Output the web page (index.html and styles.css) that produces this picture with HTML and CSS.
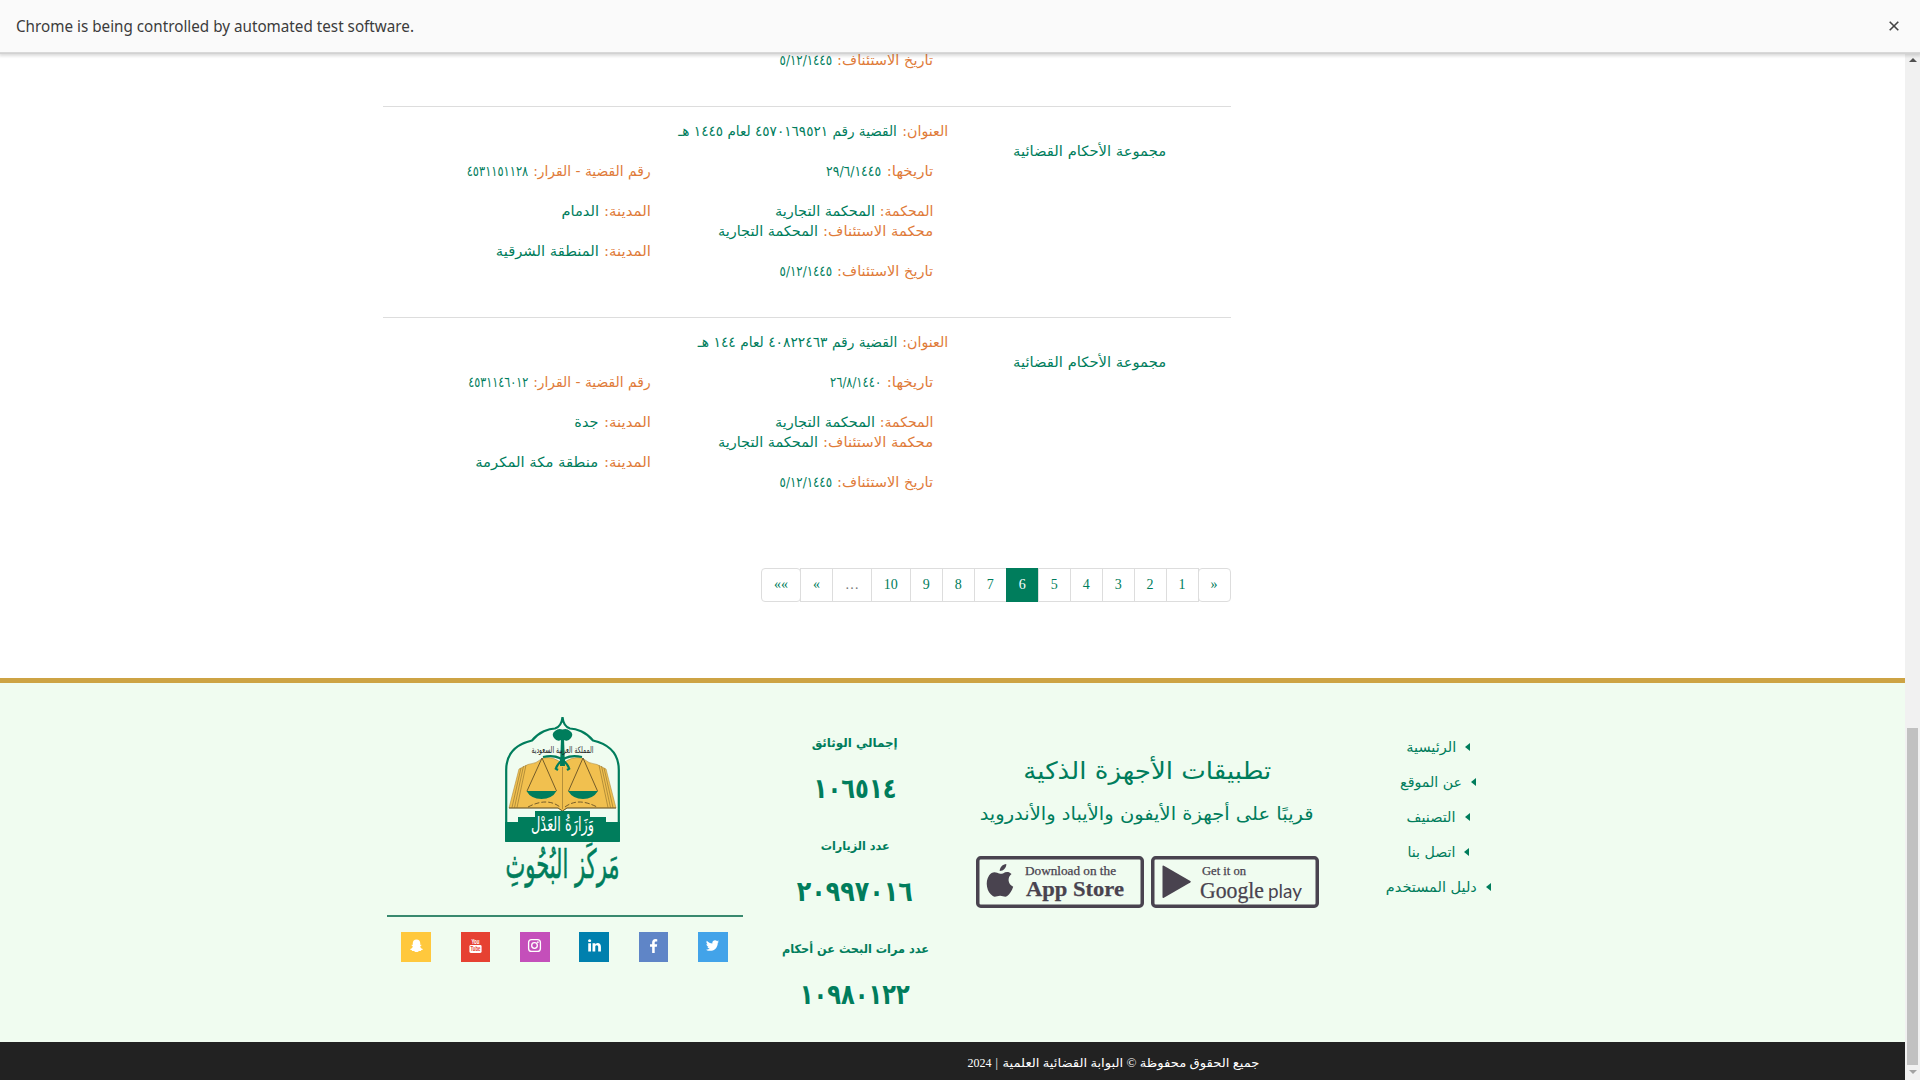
FILE: index.html
```html
<!DOCTYPE html>
<html lang="ar">
<head>
<meta charset="utf-8">
<title>البوابة القضائية العلمية</title>
<link rel="stylesheet" href="styles.css">
</head>
<body>
<div class="infobar">
  <span class="fit" data-w="398">Chrome is being controlled by automated test software.</span>
  <svg class="close" width="10" height="10" viewBox="0 0 10 10"><path d="M.7.7l8.6 8.6M9.3.7L.7 9.3"/></svg>
</div>
<div class="window">
<div class="page" dir="rtl">
  <main class="results">
    <div class="case case-cut">
      <div class="details"><div class="col-a"><p><b class="fit" data-w="96">تاريخ الاستئناف:</b><span class="fit" data-w="52.5">٥/١٢/١٤٤٥</span></p></div></div>
    </div>
    <div class="case">
      <div class="group"><span class="fit" data-w="153">مجموعة الأحكام القضائية</span></div>
      <div class="details">
        <p class="title"><b class="fit" data-w="46">العنوان:</b><span class="fit" data-w="218.5">القضية رقم ٤٥٧٠١٦٩٥٢١ لعام ١٤٤٥ هـ</span></p>
        <div class="col-a">
          <p class="gap"><b class="fit" data-w="46.5">تاريخها:</b><span class="fit" data-w="55">٢٩/٦/١٤٤٥</span></p>
          <p><b class="fit" data-w="53.5">المحكمة:</b><span class="fit" data-w="100">المحكمة التجارية</span></p>
          <p class="gap"><b class="fit" data-w="110">محكمة الاستئناف:</b><span class="fit" data-w="100">المحكمة التجارية</span></p>
          <p><b class="fit" data-w="96">تاريخ الاستئناف:</b><span class="fit" data-w="52.5">٥/١٢/١٤٤٥</span></p>
        </div>
        <div class="col-b">
          <p class="gap"><b class="fit" data-w="117.5">رقم القضية - القرار:</b><span class="fit" data-w="61.500">٤٥٣١١٥١١٢٨</span></p>
          <p class="gap"><b class="fit" data-w="47">المدينة:</b><span class="fit" data-w="37.5">الدمام</span></p>
          <p><b class="fit" data-w="47">المدينة:</b><span class="fit" data-w="103">المنطقة الشرقية</span></p>
        </div>
      </div>
    </div>
    <div class="case">
      <div class="group"><span class="fit" data-w="153">مجموعة الأحكام القضائية</span></div>
      <div class="details">
        <p class="title"><b class="fit" data-w="46">العنوان:</b><span class="fit" data-w="199.500">القضية رقم ٤٠٨٢٢٤٦٣ لعام ١٤٤ هـ</span></p>
        <div class="col-a">
          <p class="gap"><b class="fit" data-w="46.5">تاريخها:</b><span class="fit" data-w="51">٢٦/٨/١٤٤٠</span></p>
          <p><b class="fit" data-w="53.5">المحكمة:</b><span class="fit" data-w="100">المحكمة التجارية</span></p>
          <p class="gap"><b class="fit" data-w="110">محكمة الاستئناف:</b><span class="fit" data-w="100">المحكمة التجارية</span></p>
          <p><b class="fit" data-w="96">تاريخ الاستئناف:</b><span class="fit" data-w="52.5">٥/١٢/١٤٤٥</span></p>
        </div>
        <div class="col-b">
          <p class="gap"><b class="fit" data-w="117.5">رقم القضية - القرار:</b><span class="fit" data-w="60">٤٥٣١١٤٦٠١٢</span></p>
          <p class="gap"><b class="fit" data-w="47">المدينة:</b><span class="fit" data-w="24">جدة</span></p>
          <p><b class="fit" data-w="47">المدينة:</b><span class="fit" data-w="123">منطقة مكة المكرمة</span></p>
        </div>
      </div>
    </div>
    <nav class="pagination" dir="ltr">
      <a class="round wide">««</a><a>«</a><a class="dots wide">…</a><a class="wide">10</a><a>9</a><a>8</a><a>7</a><a class="active">6</a><a>5</a><a>4</a><a>3</a><a>2</a><a>1</a><a class="round">»</a>
    </nav>
  </main>

  <footer class="footer">
    <ul class="links">
      <li><i></i><span class="fit" data-w="50">الرئيسية</span></li>
      <li><i></i><span class="fit" data-w="62">عن الموقع</span></li>
      <li><i></i><span class="fit" data-w="49">التصنيف</span></li>
      <li><i></i><span class="fit" data-w="48">اتصل بنا</span></li>
      <li><i></i><span class="fit" data-w="91">دليل المستخدم</span></li>
    </ul>
    <section class="apps">
      <h2><span class="fit" data-w="248">تطبيقات الأجهزة الذكية</span></h2>
      <h3><span class="fit" data-w="334">قريبًا على أجهزة الأيفون والأيباد والأندرويد</span></h3>
      <div class="badges" dir="ltr">
        <svg width="168" height="52" viewBox="0 0 168 52">
          <rect class="frame" x="1.75" y="1.75" width="164.500" height="48.500" rx="3"/>
          <path d="M27 17.500c3-2 6-2 8.500.6-4.500 3.400-3.700 10.400 1.700 12.600-1.300 4-3.700 7.500-6 9.400-2.300 1.500-4.300-.4-7.200-.3-3 0-5 1.800-7.200.2C11 36.500 8.500 26 13.200 19.300c2-2.900 5-3.700 8-2.500 2.600 1.100 3.500 1.300 5.800.7z"/>
          <path d="M23.700 15c-.1-3.600 3-6.900 6.600-7 .3 3.600-2.800 7-6.600 7z"/>
          <text x="49" y="18.500" class="slab" font-size="12" textLength="91" lengthAdjust="spacingAndGlyphs">Download on the</text>
          <text x="50" y="40" class="slab heavy" font-size="21" textLength="98" lengthAdjust="spacingAndGlyphs">App Store</text>
        </svg>
        <svg width="168" height="52" viewBox="0 0 168 52">
          <rect class="frame" x="1.75" y="1.75" width="164.500" height="48.500" rx="3"/>
          <path d="M11.500 10.500q0-1.600 1.400-.8L39.300 25q1.200.8 0 1.600L12.900 41.800q-1.400.6-1.400-.8z"/>
          <text x="51" y="18.500" class="slab" font-size="12" textLength="44" lengthAdjust="spacingAndGlyphs">Get it on</text>
          <text x="49" y="41.500" class="slab" font-size="23" textLength="64" lengthAdjust="spacingAndGlyphs">Google</text>
          <text x="117" y="41.500" class="play" font-size="20" textLength="34" lengthAdjust="spacingAndGlyphs">play</text>
        </svg>
      </div>
    </section>
    <section class="stats">
      <h4><span class="fit" data-w="86">إجمالي الوثائق</span></h4><strong><span class="fit" data-w="83">١٠٦٥١٤</span></strong>
      <h4><span class="fit" data-w="69">عدد الزيارات</span></h4><strong><span class="fit" data-w="116">٢٠٩٩٧٠١٦</span></strong>
      <h4><span class="fit" data-w="147">عدد مرات البحث عن أحكام</span></h4><strong><span class="fit" data-w="110">١٠٩٨٠١٢٢</span></strong>
    </section>
    <section class="brand">
      <svg class="logo" width="115" height="178" viewBox="0 0 115 178">
        <path class="arch" d="M1.200 126V55C1.200 38 12 29 27 25.500 34 17 44 13.500 50 13.500 55 12 57 7 57.500 2 58 7 60 12 65 13.500 71 13.500 81 17 88 25.500 103 29 113.800 38 113.800 55V126z"/>
        <path class="book" d="M4 93L14 54 23 49.500Q31 49 38 43 49 41 57.500 49 66 41 77 43 84 49 92 49.500L101 54 111 93H62l-4.500 3-4.500-3z"/>
        <path class="thin soft" d="M7 92.500L16 53M9.500 92.500L18.500 51M12 92.500L21 50M108 92.500L99 53M105.500 92.500L96.500 51M103 92.500L94 50M57.500 52V94"/>
        <path class="thin" d="M4 93H53l4.500 3 4.500-3H111M22 76L37 43 51.500 76M63.500 76L78 43 92.500 76"/>
        <path class="thin dash" d="M23 92Q42 82 55 92M60 92Q73 82 92 92"/>
        <path class="green" d="M21.500 76H51.500Q47 84 36.500 84T21.500 76zM63 76H93Q88 84 78 84T63 76z"/>
        <path class="green" d="M56 23h3l1 28h-5z"/>
        <path class="green" d="M50 16q3-3 7.500-1.500Q62 13 65 16q4 3 1 7-3 4-7 2l-1.500 1.500L56 25q-4 2-7-2-3-4 1-7z"/>
        <path class="sword" d="M38 42Q57 38 64 53M77 42Q58 38 51 53M50 53l3 2M65 53l-3 2"/>
        <text class="kingdom" x="57.500" y="38" textLength="62" lengthAdjust="spacingAndGlyphs">المملكة العربية السعودية</text>
        <path class="green" d="M0 107H13V102H30V96H85V102H101V107H115V126H0z"/>
        <text class="ministry" x="57.500" y="116" textLength="63" lengthAdjust="spacingAndGlyphs">وَزَارَةُ العَدْل</text>
        <text class="center" x="57.500" y="163" textLength="114" lengthAdjust="spacingAndGlyphs">مَركَز البُحُوثِ</text>
      </svg>
      <div class="social">
        <a class="tw"><svg viewBox="0 0 1792 1792"><path d="M1684 408q-67 98-162 167 1 14 1 42 0 130-38 259.500t-115.500 248.500-184.500 210.500-258 146-323 54.500q-271 0-496-145 35 4 78 4 225 0 401-138-105-2-188-64.500t-114-159.500q33 5 61 5 43 0 85-11-112-23-185.500-111.500t-73.500-205.500v-4q68 38 146 41-66-44-105-115t-39-154q0-88 44-163 121 149 294.500 238.500t371.500 99.500q-8-38-8-74 0-134 94.500-228.500t228.500-94.500q140 0 236 102 109-21 205-78-37 115-142 178 93-10 186-50z"/></svg></a>
        <a class="fb"><svg viewBox="0 0 1792 1792"><path d="M1343 140v264h-157q-86 0-116 36t-30 108v189h293l-39 296h-254v759h-306v-759h-255v-296h255v-218q0-186 104-288.500t277-102.500q147 0 228 12z"/></svg></a>
        <a class="li"><svg viewBox="0 0 1792 1792"><path d="M477 625v991h-330v-991h330zm21-306q1 73-50.500 122t-135.500 49h-2q-82 0-132-49t-50-122q0-74 51.500-122.500t134.500-48.500 133 48.500 51 122.500zm1166 729v568h-329v-530q0-105-40.500-164.500t-126.500-59.500q-63 0-105.500 34.500t-63.500 85.500q-11 30-11 81v553h-329q2-399 2-647t-1-296l-1-48h329v144h-2q20-32 41-56t56.500-52 87-43.500 114.500-15.500q171 0 275 113.500t104 332.500z"/></svg></a>
        <a class="ig"><svg viewBox="0 0 16 16"><rect class="line" x="1.700" y="1.700" width="12.600" height="12.600" rx="3.200"/><circle class="line" cx="8" cy="8" r="3"/><circle cx="11.600" cy="4.400" r=".9"/></svg></a>
        <a class="yt" dir="ltr"><svg viewBox="0 0 16 16"><text x="3.700" y="6.500" font-size="7.500" textLength="8.600" lengthAdjust="spacingAndGlyphs">You</text><rect x="1.500" y="7.500" width="13" height="8.500" rx="1.500"/><text class="tube" x="2.600" y="14.300" font-size="7.500" textLength="10.800" lengthAdjust="spacingAndGlyphs">Tube</text></svg></a>
        <a class="sc"><svg viewBox="0 0 16 16"><path d="M8 1.500c2.500 0 4 1.700 4 4v1.800c.5.200 1-.2 1.300.2.200.6-1.200.9-1.300 1.500.3 1.400 1.500 2.400 2.900 2.800.1.800-1.300 1-2 1.200-.2.500 0 .9-.5.900-.6 0-1.300-.2-2 .1-.8.500-1.300 1-2.400 1s-1.600-.5-2.400-1c-.7-.3-1.400-.1-2-.1-.5 0-.3-.4-.5-.9-.7-.2-2.100-.4-2-1.200C2.500 11.400 3.700 10.400 4 9c-.1-.6-1.500-.9-1.300-1.500.3-.4.800 0 1.300-.2V5.500c0-2.300 1.500-4 4-4z"/></svg></a>
      </div>
    </section>
  </footer>
  <div class="copyright"><span class="fit" data-w="257">جميع الحقوق محفوظة © البوابة القضائية العلمية</span><span>|</span><span>2024</span></div>
</div>
<div class="scrollbar"><i class="up"></i><div class="thumb"></div><i class="down"></i></div>
</div>
<script src="fit.js"></script>
</body>
</html>
```
FILE: fit.js
```js
// Condenses or widens each label so that it takes the width given in data-w.
document.querySelectorAll('.fit').forEach(function (el) {
  var inner = document.createElement('span');
  inner.className = 'fit-inner';
  inner.textContent = el.textContent;
  el.textContent = '';
  el.appendChild(inner);
  var target = Number(el.dataset.w);
  var natural = inner.getBoundingClientRect().width;
  el.style.width = target + 'px';
  inner.style.transform = 'scaleX(' + target / natural + ')';
});
```
FILE: styles.css
```css
* { box-sizing: border-box; }
body {
  margin: 0;
  height: 1080px;
  overflow: hidden;
  display: flex;
  flex-direction: column;
  background: #fff;
  color: #007d5c;
  font: 14px/20px "DejaVu Sans", sans-serif;
}
p, h2, h3, h4, ul { margin: 0; padding: 0; font-weight: normal; }
b { font-weight: normal; color: #e07b39; }

.fit { display: inline-block; white-space: nowrap; text-align: start; }
.fit-inner { display: inline-block; transform-origin: 0 50%; }
[dir="rtl"] .fit-inner { transform-origin: 100% 50%; }

.infobar {
  flex: none;
  height: 52px;
  padding: 0 21px 0 16px;
  display: flex;
  align-items: center;
  justify-content: space-between;
  position: relative;
  z-index: 1;
  background: #fafafa;
  color: #3c3c3c;
  font: 16px/20px "Noto Sans", sans-serif;
  box-shadow: 0 1px 0 #d8d8d8, 0 2px 0 #d2d2d2, 0 3px 3px 1px rgba(0,0,0,.14);
}
.close { fill: none; stroke: #444; stroke-width: 1.6; }

.window { flex: 1; display: flex; margin-top: -2px; min-height: 0; }
.page { flex: 1; display: flex; flex-direction: column; }

.results { width: 847.5px; margin-right: 674.5px; height: 628px; }
.case { display: flex; height: 211px; border-top: 1px solid #ddd; padding-top: 14px; }
.case-cut { height: 56px; padding: 0 282.5px 0 0; border: 0; }
.group { width: 282.5px; padding-top: 20px; text-align: center; }
.details { width: 565px; display: grid; grid-template-columns: 282.5px 282.5px; align-content: start; }
.title { grid-column: 1 / 3; margin-bottom: 20px; }
.details p { display: flex; gap: 5px; height: 20px; }
.details p.gap { margin-bottom: 20px; }
.col-a, .col-b { padding-right: 15px; }

.pagination { display: flex; margin-top: 40px; font: 14px/20px "Liberation Serif", serif; }
.pagination a {
  width: 33px;
  height: 34px;
  margin-left: -1px;
  padding: 6px 0;
  text-align: center;
  border: 1px solid #ddd;
}
.pagination a.wide { width: 40px; }
.pagination a:first-child { margin-left: 378px; }
.pagination .round { border-radius: 4px; }
.pagination .dots { color: #777; }
.pagination .active { background: #007d5c; border-color: #007d5c; color: #fff; }

.footer {
  height: 364px;
  border-top: 5px solid #cda344;
  background: #f0fcf0;
  display: flex;
  padding-right: 382.5px;
}
.links { width: 169px; padding-top: 54px; list-style: none; }
.links li { display: flex; justify-content: center; align-items: center; gap: 9px; height: 20px; margin-bottom: 15px; }
.links i { border: 4.5px solid transparent; border-right: 5px solid #007d5c; border-left: 0; }

.apps { width: 413px; padding-top: 68px; text-align: center; }
.apps h2 { font-size: 24px; line-height: 40px; }
.apps h3 { font-size: 18px; line-height: 30px; margin-top: 8px; }
.badges { display: flex; justify-content: center; gap: 7px; margin-top: 27px; fill: #49434f; }
.frame { fill: none; stroke: #49434f; stroke-width: 3.5; }
.slab { font-family: "Liberation Serif", serif; stroke: #49434f; stroke-width: .25; }
.heavy { font-weight: bold; }
.play { font-family: Lato, sans-serif; }

.stats { width: 171px; padding-top: 50px; text-align: center; font-weight: bold; }
.stats h4 { font-size: 12px; line-height: 20px; font-weight: bold; }
.stats strong { display: block; font-size: 28px; line-height: 40px; margin: 16px 0 27px; }

.brand { width: 356px; margin-right: 27px; padding-top: 32px; display: flex; flex-direction: column; align-items: center; }
.logo { margin-right: 5px; overflow: visible; }
.arch { fill: none; stroke: #007d5c; stroke-width: 2.2; }
.book { fill: #f1c04f; stroke: #b08c3c; stroke-width: .6; }
.green { fill: #007d5c; }
.thin { fill: none; stroke: #54431f; stroke-width: .8; }
.thin.soft { stroke: #9a7a30; stroke-width: .7; }
.dash { stroke-dasharray: 5 2; }
.sword { fill: none; stroke: #007d5c; stroke-width: 2.2; }
.logo text { text-anchor: middle; font-family: "DejaVu Sans", sans-serif; }
.kingdom { font-size: 9px; fill: #222; }
.ministry { font-size: 20px; fill: #fff; }
.center { font-size: 40px; fill: #007d5c; stroke: #007d5c; stroke-width: .6; }

.social { width: 356px; display: flex; justify-content: space-around; margin-top: 22px; padding-top: 15px; border-top: 2px solid #38896e; }
.social a { width: 29.5px; height: 30px; display: flex; justify-content: center; padding-top: 6px; }
.social svg { width: 15px; height: 15px; fill: #fff; overflow: visible; }
.social .line { fill: none; stroke: #fff; stroke-width: 1.4; }
.social text { font-family: "Liberation Sans Narrow", "Liberation Sans", sans-serif; font-weight: bold; }
.social .tube { fill: #e64132; }
.tw { background: #42a3e9; }
.fb { background: #5f85c7; }
.li { background: #0080ae; }
.ig { background: #c44fba; }
.yt { background: #e64132; }
.sc { background: #ffc83d; }

.copyright {
  flex: 1;
  background: #222;
  color: #fff;
  display: flex;
  gap: 4px;
  padding: 11px 646px 0 0;
  font: 12px/20px "Liberation Serif", "DejaVu Sans", serif;
}

.scrollbar { width: 15px; background: #f1f1f1; display: flex; flex-direction: column; align-items: center; padding-top: 8px; }
.scrollbar i { border: 4px solid transparent; }
.scrollbar .up { border-bottom-color: #505050; border-top: 0; }
.scrollbar .down { border-top-color: #a3a3a3; border-bottom: 0; margin-top: 5px; }
.thumb { width: 11px; height: 337px; margin-top: 666px; background: #c1c1c1; }
```
